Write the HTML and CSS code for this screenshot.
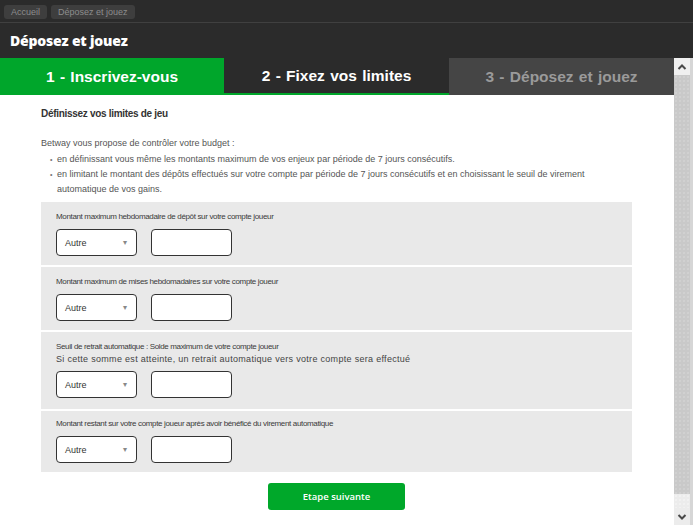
FILE: index.html
```html
<!DOCTYPE html>
<html lang="fr">
<head>
<meta charset="utf-8">
<title>Déposez et jouez</title>
<link rel="stylesheet" href="styles.css">
</head>
<body>
<div class="top">
  <nav class="crumbs">
    <span class="crumb">Accueil</span>
    <span class="crumb">Déposez et jouez</span>
  </nav>
  <h1 class="title">Déposez et jouez</h1>
</div>
<div class="main">
  <div class="pane">
    <div class="tabs">
      <div class="tab tab-done">1 - Inscrivez-vous</div>
      <div class="tab tab-active">2 - Fixez vos limites</div>
      <div class="tab tab-next">3 - Déposez et jouez</div>
    </div>
    <div class="content">
      <h2 class="heading">Définissez vos limites de jeu</h2>
      <p class="intro">Betway vous propose de contrôler votre budget :</p>
      <ul class="bullets">
        <li>en définissant vous même les montants maximum de vos enjeux par période de 7 jours consécutifs.</li>
        <li>en limitant le montant des dépôts effectués sur votre compte par période de 7 jours consécutifs et en choisissant le seuil de virement automatique de vos gains.</li>
      </ul>
      <div class="panel">
        <div class="section">
          <div class="label">Montant maximum hebdomadaire de dépôt sur votre compte joueur</div>
          <div class="fields">
            <div class="select">Autre<span class="caret">▾</span></div>
            <div class="input"></div>
          </div>
        </div>
        <div class="section">
          <div class="label">Montant maximum de mises hebdomadaires sur votre compte joueur</div>
          <div class="fields">
            <div class="select">Autre<span class="caret">▾</span></div>
            <div class="input"></div>
          </div>
        </div>
        <div class="section section-tall">
          <div class="label">Seuil de retrait automatique : Solde maximum de votre compte joueur</div>
          <div class="sublabel">Si cette somme est atteinte, un retrait automatique vers votre compte sera effectué</div>
          <div class="fields">
            <div class="select">Autre<span class="caret">▾</span></div>
            <div class="input"></div>
          </div>
        </div>
        <div class="section section-last">
          <div class="label">Montant restant sur votre compte joueur après avoir bénéficé du virement automatique</div>
          <div class="fields">
            <div class="select">Autre<span class="caret">▾</span></div>
            <div class="input"></div>
          </div>
        </div>
      </div>
      <div class="actions">
        <button class="next">Etape suivante</button>
      </div>
    </div>
  </div>
  <div class="scrollbar">
    <div class="sb-btn">
      <svg width="10" height="8" viewBox="0 0 10 8"><polyline points="1.5,6 5,2.5 8.5,6" fill="none" stroke="#4a4a4a" stroke-width="2"/></svg>
    </div>
    <div class="sb-thumb"></div>
    <div class="sb-track"></div>
    <div class="sb-btn sb-btn-down">
      <svg width="10" height="8" viewBox="0 0 10 8"><polyline points="1.5,2 5,5.5 8.5,2" fill="none" stroke="#4a4a4a" stroke-width="2"/></svg>
    </div>
  </div>
</div>
</body>
</html>
```
FILE: styles.css
```css
* { box-sizing: border-box; }
html, body { margin: 0; padding: 0; }
body {
  background: #2b2b2b;
  font-family: "Liberation Sans", Arial, sans-serif;
  width: 693px;
  height: 525px;
  overflow: hidden;
}
.top { height: 58px; background: #2b2b2b; }
.crumbs {
  height: 23px;
  padding: 5px 4px 0;
  display: flex;
  gap: 4px;
  border-bottom: 1px solid #404040;
}
.crumb {
  height: 14px;
  line-height: 14px;
  padding: 0 7px;
  font-size: 9px;
  color: #8d8d8d;
  background: #3e3e3e;
  border-radius: 3px;
}
.title {
  margin: 0;
  height: 35px;
  line-height: 36px;
  padding-left: 10px;
  font-family: "Open Sans", sans-serif;
  font-weight: 800;
  font-size: 14px;
  color: #ffffff;
  letter-spacing: -0.2px;
}
.main { display: flex; height: 467px; }
.pane { width: 674px; background: #fff; }
.tabs { display: grid; grid-template-columns: 224px 225px 225px; height: 37px; }
.tab {
  display: flex;
  align-items: center;
  justify-content: center;
  font-weight: 700;
  font-size: 15.5px;
  color: #fff;
  word-spacing: 1px;
}
.tab-done { background: #00a62b; }
.tab-active { background: #2b2b2b; border-bottom: 2px solid #00a62b; padding-top: 1px; }
.tab-next { background: #454545; color: #9a9a9a; }
.content { padding: 12px 42px 0 41px; color: #555; }
.heading {
  margin: 0;
  font-size: 10px;
  line-height: 14px;
  color: #333;
  font-weight: 700;
  letter-spacing: -0.3px;
}
.intro { margin: 15px 0 2px; font-size: 9px; line-height: 14px; }
.bullets {
  margin: 0;
  padding: 0;
  list-style: none;
  font-size: 9px;
  line-height: 14px;
}
.bullets li { padding-left: 16px; text-indent: -7px; }
.bullets li::before { content: "•"; display: inline-block; width: 7px; text-indent: 0; font-size: 7px; color: #777; }
.panel { margin-top: 6px; background: #e9e9e9; }
.section { padding: 9px 0 9px 15px; }
.section + .section { border-top: 2px solid #fff; }
.section-tall { padding-bottom: 11px; }
.section-last { padding-top: 7px; }
.label {
  font-size: 8px;
  line-height: 12px;
  color: #3a3a3a;
  letter-spacing: -0.35px;
}
.sublabel {
  font-size: 9px;
  font-weight: 400;
  line-height: 12px;
  color: #444;
  letter-spacing: 0.3px;
}
.fields { display: flex; gap: 14px; margin-top: 6px; }
.select, .input {
  width: 81px;
  height: 27px;
  background: #fff;
  border: 1px solid #333;
  border-radius: 4px;
}
.select {
  display: flex;
  align-items: center;
  justify-content: space-between;
  padding: 0 9px 0 8px;
  font-size: 9px;
  color: #333;
}
.caret { font-size: 8px; color: #888; }
.actions { display: flex; justify-content: center; padding-top: 11px; }
.next {
  width: 137px;
  height: 27px;
  border: 0;
  border-radius: 3px;
  background: #00a82a;
  color: #fff;
  font-family: "Open Sans", sans-serif;
  font-weight: 600;
  font-size: 9.5px;
}
.scrollbar {
  width: 19px;
  display: flex;
  flex-direction: column;
  background: #f0f0f0;
  border-right: 3px solid #d6d6d6;
}
.sb-btn {
  height: 17px;
  display: flex;
  align-items: center;
  justify-content: center;
  background: #f0f0f0;
}
.sb-thumb {
  height: 419px;
  background-color: #c9c9c9;
  background-image: radial-gradient(#d8d8d8 0.6px, transparent 0.8px);
  background-size: 4px 4px;
}
.sb-track {
  flex: 1;
  background-color: #ececec;
  background-image: radial-gradient(#f7f7f7 0.6px, transparent 0.8px);
  background-size: 4px 4px;
}
.sb-btn-down { height: 17px; background: #ececec; }
```
